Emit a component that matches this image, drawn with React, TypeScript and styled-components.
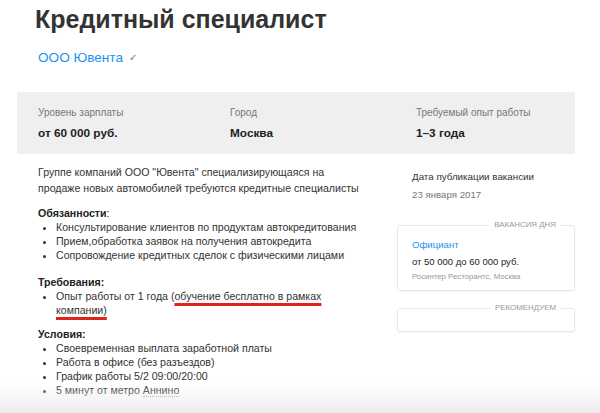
import React from "react";
import styled, { createGlobalStyle } from "styled-components";

const Global = createGlobalStyle`
  html, body { margin: 0; padding: 0; background: #fff; }
  body { font-family: "Liberation Sans", Arial, Helvetica, sans-serif; color: #333; }
  * { box-sizing: border-box; }
`;

const Page = styled.div`
  width: 558px;
  margin-left: 17px;
`;

const Header = styled.header`
  padding: 4px 0 0 21px;
`;

const Title = styled.h1`
  margin: 0 0 0 -3px;
  font-size: 25px;
  line-height: 30px;
  font-weight: 700;
  color: #333;
`;

const Company = styled.div`
  margin-top: 13px;
  display: flex;
  align-items: center;
  gap: 6px;
  height: 20px;
`;

const CompanyLink = styled.a`
  font-size: 13.6px;
  color: #1d92ec;
  text-decoration: none;
`;

const Check = styled.span`
  font-size: 10px;
  color: #777;
`;

const Stats = styled.section`
  margin-top: 25px;
  background: #efefef;
  padding: 13px 0 12px 21px;
  display: grid;
  grid-template-columns: 192px 186px 1fr;
`;

const Stat = styled.div`
  display: flex;
  flex-direction: column;
  gap: 3px;
`;

const StatLabel = styled.div`
  font-size: 10px;
  line-height: 16px;
  color: #777;
`;

const StatValue = styled.div`
  font-size: 11.8px;
  line-height: 18px;
  font-weight: 700;
  color: #222;
`;

const Body = styled.div`
  display: grid;
  grid-template-columns: 380px 178px;
  padding-top: 10px;
`;

const Main = styled.div`
  padding-left: 21px;
  font-size: 10.6px;
  color: #333;
`;

const Desc = styled.p`
  margin: 0;
  line-height: 16px;
`;

const SectionTitle = styled.div<{ $gap: number }>`
  margin-top: ${(p) => p.$gap}px;
  line-height: 14px;
  font-weight: 700;
  color: #222;
`;

const Light = styled.span`
  font-weight: 400;
`;

const List = styled.ul`
  margin: 0;
  padding-left: 18px;
  line-height: 14px;
`;

const Item = styled.li`
  padding-left: 0;
`;

const Marked = styled.span`
  text-decoration: underline;
  text-decoration-color: #e2231a;
  text-decoration-thickness: 2.6px;
  text-underline-offset: 3px;
  text-decoration-skip-ink: none;
`;

const Metro = styled.span`
  border-bottom: 1px dotted #999;
`;

const Side = styled.aside`
  padding-top: 5px;
  display: flex;
  flex-direction: column;
`;

const DateLabel = styled.div`
  padding-left: 15px;
  font-size: 9.8px;
  line-height: 16px;
  color: #333;
`;

const DateValue = styled.div`
  padding-left: 15px;
  margin-top: 2px;
  font-size: 9.7px;
  line-height: 16px;
  color: #777;
`;

const Card = styled.div<{ $top: number; $height?: number }>`
  position: relative;
  margin-top: ${(p) => p.$top}px;
  border: 1px solid #e8e8e8;
  border-radius: 3px;
  box-shadow: 0 1px 2px rgba(0, 0, 0, 0.04);
  padding: 11px 14px 6px 14px;
  min-height: ${(p) => p.$height ?? 0}px;
`;

const Legend = styled.span`
  position: absolute;
  top: -7px;
  right: 13px;
  padding: 0 5px;
  background: #fff;
  font-size: 7.9px;
  line-height: 12px;
  color: #999;
  text-transform: uppercase;
`;

const JobLink = styled.a`
  display: block;
  font-size: 9.6px;
  line-height: 16px;
  color: #1d92ec;
  text-decoration: none;
`;

const Salary = styled.div`
  margin-top: 1px;
  font-size: 9.5px;
  line-height: 16px;
  color: #222;
`;

const Employer = styled.div`
  font-size: 7.8px;
  line-height: 14px;
  color: #999;
`;

const Fade = styled.div`
  position: fixed;
  left: 0;
  right: 0;
  bottom: 0;
  height: 30px;
  pointer-events: none;
  background: linear-gradient(to bottom, rgba(238, 238, 238, 0), rgba(236, 236, 236, 0.95));
`;

export default function App() {
  return (
    <>
      <Global />
      <Page>
        <Header>
          <Title>Кредитный специалист</Title>
          <Company>
            <CompanyLink href="#">ООО Ювента</CompanyLink>
            <Check>✓</Check>
          </Company>
        </Header>
        <Stats>
          <Stat>
            <StatLabel>Уровень зарплаты</StatLabel>
            <StatValue>от 60 000 руб.</StatValue>
          </Stat>
          <Stat>
            <StatLabel>Город</StatLabel>
            <StatValue>Москва</StatValue>
          </Stat>
          <Stat>
            <StatLabel>Требуемый опыт работы</StatLabel>
            <StatValue>1–3 года</StatValue>
          </Stat>
        </Stats>
        <Body>
          <Main>
            <Desc>
              Группе компаний ООО "Ювента" специализирующаяся на
              <br />
              продаже новых автомобилей требуются кредитные специалисты
            </Desc>
            <SectionTitle $gap={10}>
              Обязанности<Light>:</Light>
            </SectionTitle>
            <List>
              <Item>Консультирование клиентов по продуктам автокредитования</Item>
              <Item>Прием,обработка заявок на получения автокредита</Item>
              <Item>Сопровождение кредитных сделок с физическими лицами</Item>
            </List>
            <SectionTitle $gap={13}>Требования:</SectionTitle>
            <List>
              <Item>
                Опыт работы от 1 года (<Marked>обучение бесплатно в рамках</Marked>
                <br />
                <Marked>компании)</Marked>
              </Item>
            </List>
            <SectionTitle $gap={10}>Условия:</SectionTitle>
            <List>
              <Item>Своевременная выплата заработной платы</Item>
              <Item>Работа в офисе (без разъездов)</Item>
              <Item>График работы 5/2 09:00/20:00</Item>
              <Item>
                5 минут от метро <Metro>Аннино</Metro>
              </Item>
            </List>
          </Main>
          <Side>
            <DateLabel>Дата публикации вакансии</DateLabel>
            <DateValue>23 января 2017</DateValue>
            <Card $top={22}>
              <Legend>Вакансия дня</Legend>
              <JobLink href="#">Официант</JobLink>
              <Salary>от 50 000 до 60 000 руб.</Salary>
              <Employer>Росинтер Ресторантс, Москва</Employer>
            </Card>
            <Card $top={17} $height={24}>
              <Legend>Рекомендуем</Legend>
            </Card>
          </Side>
        </Body>
      </Page>
      <Fade />
    </>
  );
}
